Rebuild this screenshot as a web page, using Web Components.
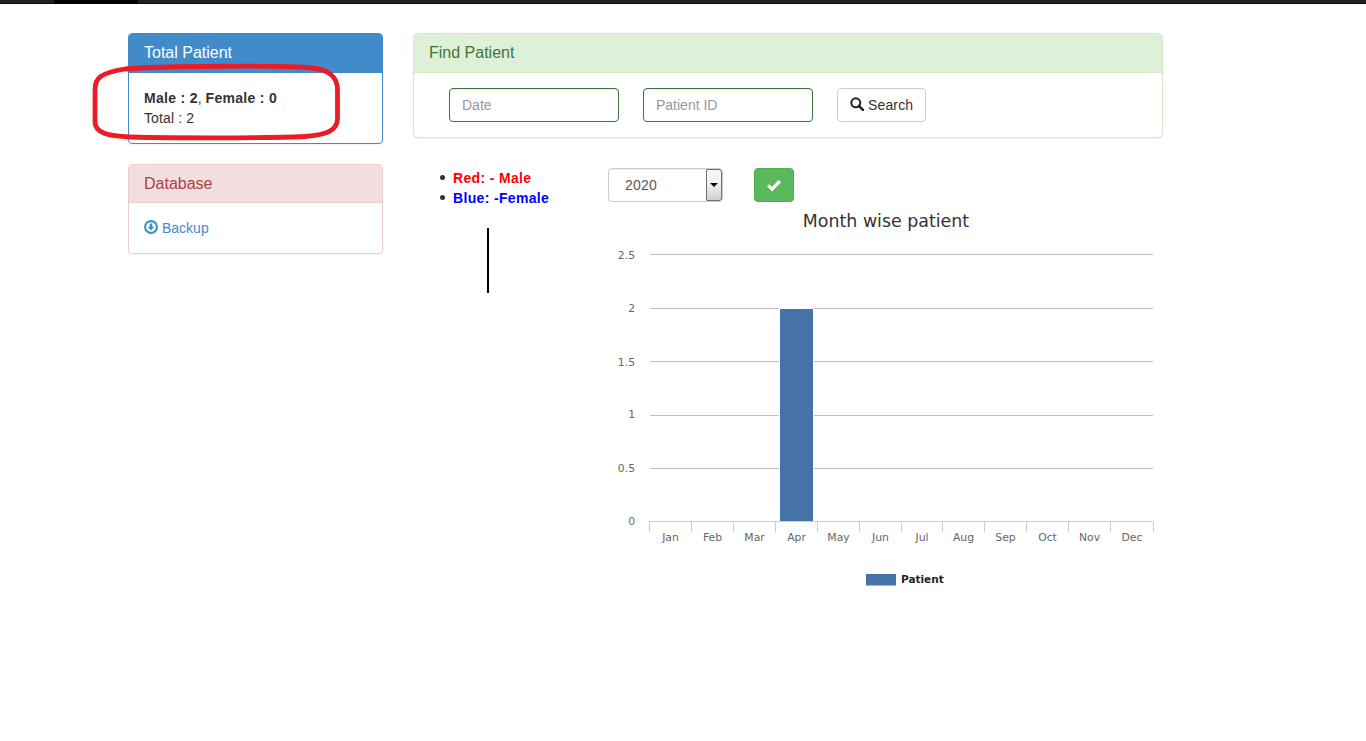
<!DOCTYPE html>
<html lang="en">
<head>
<meta charset="utf-8">
<title>Patient dashboard</title>
<style>
html,body{margin:0;padding:0;background:#fff;}
body{font:14px/20px "Liberation Sans",Arial,sans-serif;color:#333;}
b{letter-spacing:.3px;}
.total{letter-spacing:.12px;}
</style>
</head>
<body>
<hms-topbar></hms-topbar>
<hms-page>
  <div slot="side">
    <hms-panel tone="primary" title="Total Patient">
      <div><b>Male : 2</b>, <b>Female : 0</b></div>
      <div class="total">Total : 2</div>
    </hms-panel>
    <hms-panel tone="danger" title="Database">
      <hms-backup></hms-backup>
    </hms-panel>
  </div>
  <div slot="main">
    <hms-panel tone="success" title="Find Patient"><hms-search></hms-search></hms-panel>
    <hms-report></hms-report>
  </div>
</hms-page>
<hms-annotation></hms-annotation>
<script>
function def(name, html, setup){
  customElements.define(name, class extends HTMLElement{
    connectedCallback(){
      if(this.shadowRoot) return;
      const r=this.attachShadow({mode:'open'});
      r.innerHTML=html;
      if(setup) setup.call(this,r);
    }
  });
}
def('hms-topbar',`<style>
:host{display:flex;height:4px;background:#222;box-shadow:inset 0 -1px 0 #0a0a0a;}
i{display:block;margin-left:54px;width:84px;background:#000;}
</style><i></i>`);

def('hms-page',`<style>
:host{display:grid;grid-template-columns:255px 750px;column-gap:30px;padding:29px 0 0 128px;}
</style><div><slot name="side"></slot></div><div><slot name="main"></slot></div>`);

def('hms-panel',`<style>
:host{display:block;margin-bottom:20px;background:#fff;border:1px solid var(--b);border-radius:4px;box-shadow:0 1px 1px rgba(0,0,0,.05);}
:host([tone=primary]){--b:#428bca;--h:#428bca;--c:#fff;}
:host([tone=danger]){--b:#ebccd1;--h:#f2dede;--c:#a94442;}
:host([tone=success]){--b:#d6e9c6;--h:#dff0d8;--c:#3c763d;}
header{padding:10px 15px;background:var(--h);color:var(--c);border-bottom:1px solid var(--b);border-radius:3px 3px 0 0;font-size:16px;line-height:17.6px;}
main{display:block;padding:15px;}
</style><header></header><main><slot></slot></main>`,function(r){
  r.querySelector('header').textContent=this.getAttribute('title');
  this.removeAttribute('title');
  this.dataset.heading=r.querySelector('header').textContent;
});

def('hms-backup',`<style>
:host{display:block;color:#428bca;}
div{display:flex;align-items:center;gap:4px;}
svg{display:block;margin-top:-3px;}
</style><div><svg width="14" height="14" viewBox="0 0 14 14" aria-hidden="true">
<circle cx="7" cy="7" r="5.9" fill="none" stroke="#428bca" stroke-width="2.1"/>
<path d="M5.7 3.4h2.6v3.3h2L7 10.4 3.7 6.7h2z" fill="#428bca"/></svg><span>Backup</span></div>`);

def('hms-search',`<style>
:host{display:flex;gap:24px;padding-left:20px;}
input{box-sizing:border-box;width:170px;height:34px;padding:6px 12px;margin:0;border:1px solid #3c763d;border-radius:4px;font:14px/20px "Liberation Sans",Arial,sans-serif;color:#555;background:#fff;outline:0;box-shadow:inset 0 1px 1px rgba(0,0,0,.075);}
input::placeholder{color:#999;opacity:1;}
button{box-sizing:border-box;display:flex;align-items:center;gap:4px;height:34px;width:89px;padding:0 0 0 12px;margin:0;border:1px solid #ccc;border-radius:4px;background:#fff;color:#333;font:14px/20px "Liberation Sans",Arial,sans-serif;letter-spacing:.15px;}
svg{display:block;margin-top:-2px;}
</style><input type="text" placeholder="Date" aria-label="Date"><input type="text" placeholder="Patient ID" aria-label="Patient ID">
<button type="button"><svg width="14" height="14" viewBox="0 0 14 14" aria-hidden="true"><circle cx="5.8" cy="5.8" r="4.5" fill="none" stroke="#222" stroke-width="2"/><path d="M8.9 8.9l4 4" stroke="#222" stroke-width="2.6" stroke-linecap="round"/></svg><span>Search</span></button>`);

def('hms-report',`<style>
:host{display:grid;grid-template-columns:187px 563px;padding-top:10px;margin-top:0;}
ul{margin:0;padding:0 0 0 27px;font-weight:bold;list-style:none;letter-spacing:.34px;}
li{display:flex;align-items:center;gap:8px;}
li::before{content:"";width:5px;height:5px;border-radius:50%;background:#333;}
.r{color:#f00;}.b{color:#00f;}
.bar{width:2px;height:65px;background:#000;margin:20px 0 0 74px;}
.ctl{display:flex;gap:31px;margin-left:8px;height:34px;}
.sel{box-sizing:border-box;position:relative;width:115px;height:34px;padding:6px 16px;border:1px solid #ccc;border-radius:4px;color:#555;background:#fff;box-shadow:inset 0 1px 1px rgba(0,0,0,.075);letter-spacing:.2px;}
.arrow{position:absolute;right:0;top:0;box-sizing:border-box;width:16px;height:32px;border:1px solid #707070;border-radius:1px 3px 3px 1px;background:linear-gradient(#f6f6f6,#f2f2f2 45%,#cfcfcf);}
.arrow::after{content:"";position:absolute;left:3px;top:13px;border:4px solid transparent;border-top:4px solid #000;border-bottom:0;}
.ok{box-sizing:border-box;display:flex;align-items:center;justify-content:center;width:40px;height:34px;padding:0;margin:0;border:1px solid #4cae4c;border-radius:4px;background:#5cb85c;}
svg.chart{display:block;width:563px;height:392px;margin-top:6px;}
text{font-family:"DejaVu Sans",sans-serif;}
.tick{font-size:10.8px;fill:#666;}
</style>
<div>
  <ul><li><span class="r">Red: - Male</span></li><li><span class="b">Blue: -Female</span></li></ul>
  <div class="bar"></div>
</div>
<div>
  <div class="ctl">
    <div class="sel">2020<span class="arrow"></span></div>
    <button class="ok" type="button" aria-label="Apply"><svg width="16" height="14" viewBox="0 0 16 14" aria-hidden="true"><path d="M2.2 7.4l3.9 3.8 7.7-8" fill="none" stroke="#fff" stroke-width="3.3"/></svg></button>
  </div>
  <svg class="chart" viewBox="600 208 563 392" id="c"></svg>
</div>`,function(r){
  const m=['Jan','Feb','Mar','Apr','May','Jun','Jul','Aug','Sep','Oct','Nov','Dec'];
  const ys=[['2.5',254.5,258.5],['2',308.5,312],['1.5',361.5,365.5],['1',415.5,418],['0.5',468.5,471.5]];
  const tx=[649,691,733,775,817,859,901,942,984,1026,1068,1110,1153];
  let s='<text x="886" y="227" text-anchor="middle" style="font-size:17.4px;fill:#333">Month wise patient</text>';
  ys.forEach(([t,y,ty])=>{s+=`<path d="M650 ${y}H1153" stroke="#c0c0c0" stroke-width="1"/><text class="tick" x="635" y="${ty}" text-anchor="end">${t}</text>`;});
  s+='<text class="tick" x="635" y="525" text-anchor="end">0</text>';
  s+='<rect x="779.5" y="308.5" width="34" height="213" fill="#4572a7" stroke="#fff"/>';
  s+='<path d="M649 521.5H1154" stroke="#c0d0e0"/>';
  tx.forEach(x=>{s+=`<path d="M${x+.5} 522V532" stroke="#c0d0e0"/>`;});
  m.forEach((t,i)=>{s+=`<text class="tick" x="${(tx[i]+tx[i+1])/2+.5}" y="541" text-anchor="middle">${t}</text>`;});
  s+='<rect x="866" y="574" width="30" height="11.500" fill="#4572a7"/>';
  s+='<text x="901" y="583" style="font-size:10.5px;font-weight:bold;fill:#222">Patient</text>';
  r.getElementById('c').innerHTML=s;
});

def('hms-annotation',`<style>
:host{position:absolute;left:0;top:0;width:400px;height:160px;pointer-events:none;}
svg{display:block;}
</style><svg width="400" height="160" viewBox="0 0 400 160" aria-hidden="true"><path d="M95 90C95 78 100 73 125 69 160 66 280 65 312 68 330 70 337.500 77 337.500 90V118C337.500 130 328 135 305 136.500 260 138.500 170 138 130 137 108 136 95 133 95 122Z" fill="none" stroke="#ed1c24" stroke-width="4.800"/></svg>`);
</script>
</body>
</html>
